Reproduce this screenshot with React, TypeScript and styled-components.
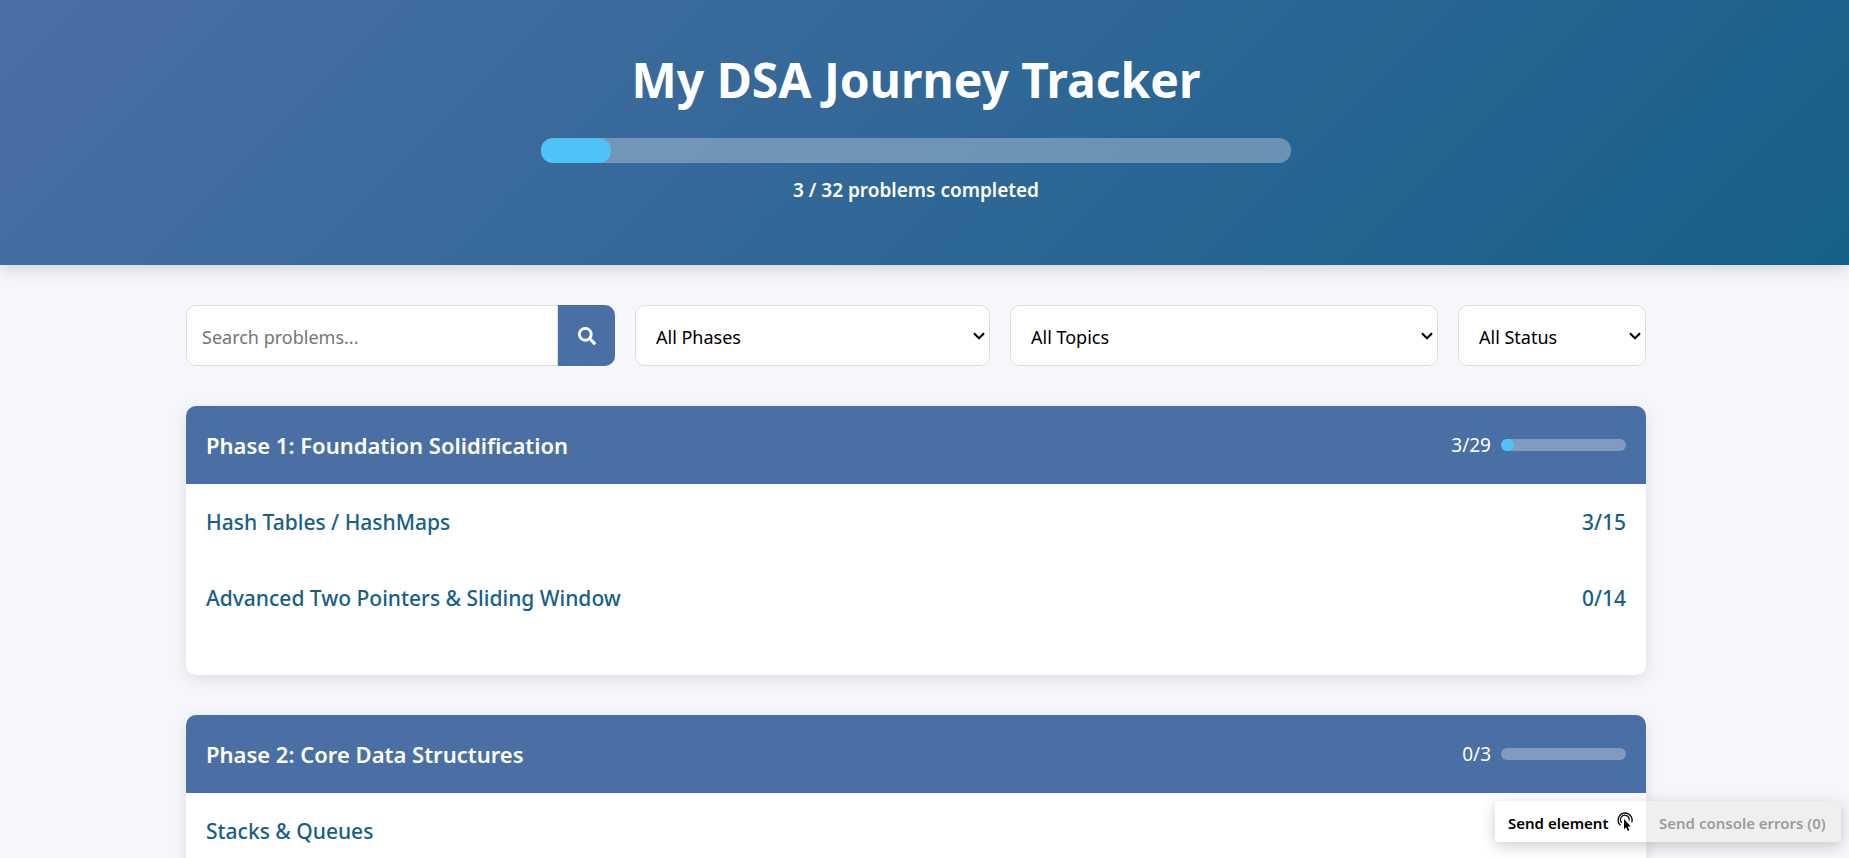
import React from "react";
import styled, { createGlobalStyle } from "styled-components";
import { FaSearch } from "react-icons/fa";

const GlobalStyle = createGlobalStyle`
  *, *::before, *::after { box-sizing: border-box; }
  html { overflow: hidden; }
  body {
    margin: 0;
    background: #f5f7fb;
    color: #000;
    font-family: "Segoe UI", "Noto Sans", "Open Sans", sans-serif;
    font-size: 19px;
    line-height: 30px;
  }
  button, input, select { font-family: inherit; }
`;

const Page = styled.div`
  height: 100vh;
  overflow: hidden;
`;

const Hero = styled.header`
  display: flex;
  flex-direction: column;
  align-items: center;
  padding: 40px 37px 60px 20px;
  background: linear-gradient(135deg, #4a6fa5, #166088);
  box-shadow: 0 4px 15px rgba(0, 0, 0, 0.15);
  color: #fff;
`;

const Title = styled.h1`
  margin: 0 0 18px;
  font-size: 48px;
  font-weight: 700;
  line-height: 80px;
`;

const Track = styled.div<{ $large?: boolean }>`
  width: ${(p) => (p.$large ? "750px" : "125px")};
  max-width: 100%;
  height: ${(p) => (p.$large ? "25px" : "12px")};
  border-radius: 12px;
  background: rgba(255, 255, 255, 0.3);
  overflow: hidden;
`;

const Fill = styled.div`
  height: 100%;
  border-radius: 12px;
  background: #4fc3f7;
`;

const Summary = styled.p`
  margin: 12px 0 0;
  font-weight: 600;
`;

const Content = styled.main`
  padding: 40px 37px 40px 20px;
`;

const Container = styled.div`
  display: flex;
  flex-direction: column;
  gap: 40px;
  max-width: 1460px;
  margin: 0 auto;
`;

const Filters = styled.form`
  display: grid;
  grid-template-columns: 429fr 355fr 428fr 188fr;
  gap: 20px;
`;

const SearchBox = styled.div`
  display: flex;
  min-width: 0;
`;

const SearchInput = styled.input`
  flex: 1;
  min-width: 0;
  height: 61px;
  padding: 2px 15px 0;
  border: 1px solid #ddd;
  border-radius: 10px 0 0 10px;
  background: #fff;
  font-size: 18px;

  &::placeholder { color: #757575; }
`;

const SearchButton = styled.button`
  display: flex;
  align-items: center;
  justify-content: center;
  width: 57px;
  padding: 0;
  border: 0;
  border-radius: 0 10px 10px 0;
  background: #4a6fa5;
  color: #fff;
  font-size: 18px;
`;

const SelectBox = styled.div`
  display: grid;
  align-items: center;
  min-width: 0;

  & > * { grid-area: 1 / 1; }

  & > svg {
    justify-self: end;
    margin-right: 5px;
    pointer-events: none;
  }
`;

const Select = styled.select`
  appearance: none;
  width: 100%;
  height: 61px;
  padding: 2px 20px 0;
  border: 1px solid #ddd;
  border-radius: 10px;
  background: #fff;
  color: #000;
  font-size: 18px;
`;

const Card = styled.section`
  border-radius: 10px;
  background: #fff;
  box-shadow: 0 4px 15px rgba(0, 0, 0, 0.1);
  overflow: hidden;
`;

const CardHeader = styled.div`
  display: flex;
  align-items: center;
  justify-content: space-between;
  height: 78px;
  padding: 0 20px;
  background: #4a6fa5;
  color: #fff;
`;

const PhaseTitle = styled.h2`
  margin: 0;
  font-size: 22px;
  font-weight: 600;
`;

const PhaseProgress = styled.div`
  display: flex;
  align-items: center;
  gap: 10px;
`;

const TopicList = styled.ul`
  margin: 0;
  padding: 0 0 39px;
  list-style: none;
`;

const Topic = styled.li`
  display: flex;
  align-items: center;
  justify-content: space-between;
  height: 76px;
  padding: 0 20px;
  color: #166088;
  font-size: 21px;
  font-weight: 500;
`;

const DevBar = styled.aside`
  position: fixed;
  right: 8px;
  bottom: 16px;
  display: grid;
  grid-template-columns: 151px 195px;
  border-radius: 4px;
  box-shadow: 0 4px 15px rgba(0, 0, 0, 0.2);
  overflow: hidden;
`;

const DevButton = styled.button`
  display: flex;
  align-items: center;
  justify-content: space-between;
  height: 41px;
  padding: 2px 13px 0;
  border: 0;
  background: #fff;
  color: #000;
  font-size: 15px;
  font-weight: 600;
  white-space: nowrap;

  &:disabled {
    background: #efefef;
    color: #9b9b9b;
  }
`;

const PickIcon = () => (
  <svg width="16" height="21" viewBox="0 0 16 21" fill="none" aria-hidden="true">
    <path d="M3.4 13.2A7 7 0 1 1 14.7 10.4" stroke="#000" strokeWidth="1.3" />
    <path d="M5 10.8A4.3 4.3 0 1 1 12 8.6" stroke="#000" strokeWidth="1.2" />
    <path d="M7 7v10.2l2.2-2 1.6 3.7 1.6-.7-1.6-3.6h3z" fill="#000" />
  </svg>
);

const ChevronIcon = () => (
  <svg width="12" height="8" viewBox="0 0 12 8" fill="none" aria-hidden="true">
    <path d="M1 1.2l5 5 5-5" stroke="#000" strokeWidth="2.2" />
  </svg>
);

interface FilterProps {
  label: string;
  options: string[];
}

const Filter = ({ label, options }: FilterProps) => (
  <SelectBox>
    <Select aria-label={label}>
      {options.map((option) => (
        <option key={option}>{option}</option>
      ))}
    </Select>
    <ChevronIcon />
  </SelectBox>
);

interface ProgressProps {
  done: number;
  total: number;
  label: string;
  large?: boolean;
}

const Progress = ({ done, total, label, large }: ProgressProps) => (
  <Track
    $large={large}
    role="progressbar"
    aria-label={label}
    aria-valuenow={done}
    aria-valuemin={0}
    aria-valuemax={total}
  >
    <Fill style={{ width: `${(done / total) * 100}%` }} />
  </Track>
);

interface Phase {
  title: string;
  done: number;
  total: number;
  topics: { name: string; count?: string }[];
}

const phases: Phase[] = [
  {
    title: "Phase 1: Foundation Solidification",
    done: 3,
    total: 29,
    topics: [
      { name: "Hash Tables / HashMaps", count: "3/15" },
      { name: "Advanced Two Pointers & Sliding Window", count: "0/14" },
    ],
  },
  {
    title: "Phase 2: Core Data Structures",
    done: 0,
    total: 3,
    topics: [{ name: "Stacks & Queues" }],
  },
];

export default function App() {
  return (
    <Page>
      <GlobalStyle />
      <Hero>
        <Title>My DSA Journey Tracker</Title>
        <Progress done={3} total={32} label="Overall progress" large />
        <Summary>3 / 32 problems completed</Summary>
      </Hero>
      <Content>
        <Container>
          <Filters onSubmit={(e) => e.preventDefault()}>
            <SearchBox>
              <SearchInput type="text" placeholder="Search problems..." aria-label="Search problems" />
              <SearchButton type="submit" aria-label="Search">
                <FaSearch />
              </SearchButton>
            </SearchBox>
            <Filter label="Phase" options={["All Phases"]} />
            <Filter label="Topic" options={["All Topics"]} />
            <Filter label="Status" options={["All Status"]} />
          </Filters>
          {phases.map((phase) => (
            <Card key={phase.title}>
              <CardHeader>
                <PhaseTitle>{phase.title}</PhaseTitle>
                <PhaseProgress>
                  <span>
                    {phase.done}/{phase.total}
                  </span>
                  <Progress done={phase.done} total={phase.total} label={phase.title} />
                </PhaseProgress>
              </CardHeader>
              <TopicList>
                {phase.topics.map((topic) => (
                  <Topic key={topic.name}>
                    <span>{topic.name}</span>
                    {topic.count && <span>{topic.count}</span>}
                  </Topic>
                ))}
              </TopicList>
            </Card>
          ))}
        </Container>
      </Content>
      <DevBar>
        <DevButton type="button">
          Send element
          <PickIcon />
        </DevButton>
        <DevButton type="button" disabled>
          Send console errors (0)
        </DevButton>
      </DevBar>
    </Page>
  );
}
